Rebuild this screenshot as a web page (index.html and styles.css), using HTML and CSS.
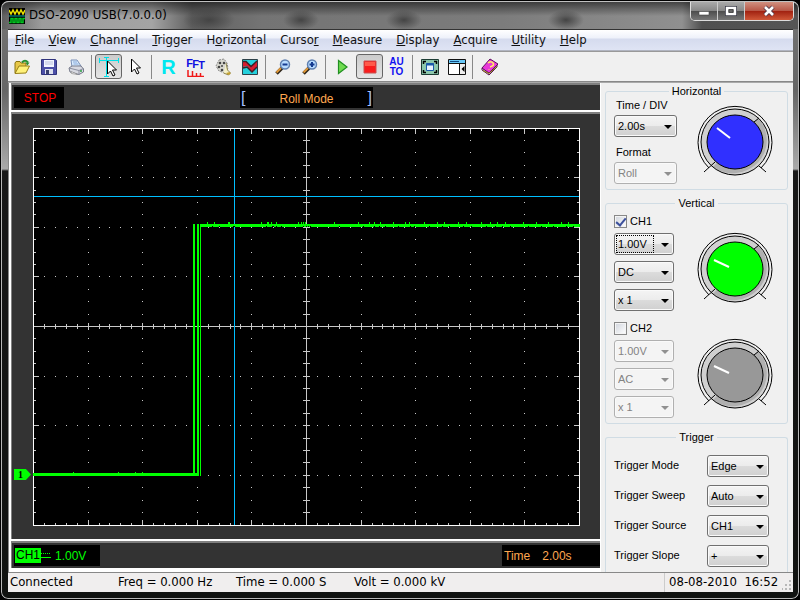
FILE: index.html
```html
<!DOCTYPE html>
<html lang="en">
<head>
<meta charset="utf-8">
<title>DSO-2090 USB(7.0.0.0)</title>
<link rel="stylesheet" href="styles.css">
</head>
<body>
<div class="window">
  <header class="titlebar">
    <svg class="app-icon" width="16" height="16" viewBox="0 0 16 16"><rect width="16" height="16" fill="#000"/><path d="M0 2l2 4 2-4 2 4 2-4 2 4 2-4 2 4 2-4" fill="none" stroke="#e8e000" stroke-width="1.5"/><path d="M0 8h16" stroke="#00a0a0"/><path d="M0 14.500h2v-4h2v4h2v-4h2v4h2v-4h2v4h2v-4h2" fill="none" stroke="#00c820" stroke-width="1.500"/></svg>
    <h1>DSO-2090 USB(7.0.0.0)</h1>
    <div class="controls">
      <button class="ctl min" aria-label="Minimize"><svg width="12" height="12" viewBox="0 0 12 12"><path d="M1 6.500h10v3.500H1z" fill="#fff" stroke="#444" stroke-width=".6"/></svg></button>
      <button class="ctl max" aria-label="Maximize"><svg width="12" height="12" viewBox="0 0 12 12"><path d="M2 3h8v6H2z" fill="none" stroke="#3c3c48" stroke-width="4"/><path d="M2 3h8v6H2z" fill="#777" stroke="#fff" stroke-width="2.400"/><path d="M4 4.500h4v3H4z" fill="#666" stroke="#333" stroke-width=".6"/></svg></button>
      <button class="ctl close" aria-label="Close"><svg width="12" height="12" viewBox="0 0 12 12"><path d="M2 2l8 8M10 2l-8 8" stroke="#50384a" stroke-width="4.500"/><path d="M2 2l8 8M10 2l-8 8" stroke="#fff" stroke-width="2.600"/></svg></button>
    </div>
  </header>

  <div class="client">
    <nav class="menu">
      <a href="#"><u>F</u>ile</a><a href="#"><u>V</u>iew</a><a href="#"><u>C</u>hannel</a><a href="#"><u>T</u>rigger</a><a href="#">H<u>o</u>rizontal</a><a href="#">Curso<u>r</u></a><a href="#"><u>M</u>easure</a><a href="#"><u>D</u>isplay</a><a href="#"><u>A</u>cquire</a><a href="#"><u>U</u>tility</a><a href="#"><u>H</u>elp</a>
    </nav>

    <div class="toolbar">
      <button aria-label="Open"><svg width="16" height="16" viewBox="0 0 16 16"><path d="M1 14V4l1-1.500h4l1 1.500h5v4" fill="#e8c848" stroke="#8a7410"/><path d="M1 14.500L5 7h10.500l-3.500 7z" fill="#fff27a" stroke="#988018"/><path d="M8 3.500q3-3.500 6 0" fill="none" stroke="#289030" stroke-width="2"/><path d="M11.500 3.500h4l-2 3z" fill="#289030"/></svg></button>
      <button aria-label="Save"><svg width="16" height="16" viewBox="0 0 16 16"><path d="M.5.500h14l1 1v14H.500z" fill="#4c50a8" stroke="#30347c"/><path d="M3 1h10v7H3z" fill="#f2f5ff"/><path d="M4 3h8M4 5h8" stroke="#b8bfdc"/><path d="M4 10h8v5H4z" fill="#dde1ef"/><path d="M5 11h3v4H5z" fill="#39406e"/></svg></button>
      <button aria-label="Print"><svg width="16" height="16" viewBox="0 0 16 16"><path d="M4 8l-1-7h6l4 6z" fill="#d8ecff" stroke="#7b91b8"/><path d="M5 3h4M5.500 5h5" stroke="#88a8d8"/><path d="M1 9l3-2h9l2.500 3v3L11 15.500 2 13z" fill="#d8dae2" stroke="#787c8c"/><path d="M1 9l10 2.500 4.500-2M11 11.500v4" fill="none" stroke="#8a8e9e"/><path d="M3 12.500l5 2 1.500 1-6-1z" fill="#fff" stroke="#777" stroke-width=".6"/><circle cx="13" cy="12" r="1" fill="#2ca040"/></svg></button>
      <span class="sep"></span>
      <button class="pressed" aria-label="Measure cursor"><svg width="22" height="22" viewBox="0 0 22 22"><path d="M1 4.500h20M1.500 2v5M20.500 2v5M8.500 1v20M6 20.500h5M6 1.500h5" stroke="#00e0e8" fill="none"/><path d="M9.500 5v13l3-3 2.500 5 2-1-2.500-5h4z" fill="#fff" stroke="#000"/></svg></button>
      <button aria-label="Pointer"><svg width="22" height="22" viewBox="0 0 22 22"><path d="M6.500 3v13l3-3 2.500 5 2-1-2.500-5h4z" fill="#fff" stroke="#000"/></svg></button>
      <span class="sep"></span>
      <button class="t-r">R</button>
      <button class="t-fft" aria-label="FFT"><span>F</span><span>F</span><span>T</span><svg width="18" height="7" viewBox="0 0 18 7"><path d="M1 0v6.500h16M5.500 1v5M9.500 3v3M13.500 3v3" fill="none" stroke="#f01818" stroke-width="1.500"/></svg></button>
      <button aria-label="Record"><svg width="18" height="18" viewBox="0 0 18 18"><path d="M5 2l5-1 3 4 1 5-3 5-6-2-3-5z" fill="#d8d8d0" stroke="#888" stroke-dasharray="2 1"/><g fill="#444"><circle cx="6" cy="5" r="1.300"/><circle cx="10" cy="5" r="1.300"/><circle cx="5" cy="9" r="1.300"/><circle cx="8" cy="12" r="1.300"/><circle cx="8" cy="8" r="1"/></g><path d="M12 5l1.500 7 3 3-2 2-5-2" fill="#f4f0c8" stroke="#8c8450"/><path d="M12 15l4-1 .5 2-2 1z" fill="#c4a030"/></svg></button>
      <button aria-label="Waveform"><svg width="16" height="16" viewBox="0 0 16 16"><path d="M.5.500h15v15H.500z" fill="#24d0dc" stroke="#2c4048"/><path d="M1 2l3 0 5 5 6-5v6l-5 5-5-6-4 1z" fill="#d81c30"/><path d="M1 2.500h3l5 5 6-5.500M1 9l4-1 5 5 5-5" fill="none" stroke="#3a2428" stroke-width="1.500"/></svg></button>
      <span class="sep"></span>
      <button aria-label="Zoom out"><svg width="16" height="16" viewBox="0 0 16 16"><path d="M1.500 14.500L7 9" stroke="#2c2418" stroke-width="3.500"/><path d="M1.500 13.500L6 9" stroke="#e09838" stroke-width="2"/><circle cx="10" cy="5.500" r="4.500" fill="#b8dcff" stroke="#6080b0" stroke-width="1.500"/><path d="M7.500 5.500h5" stroke="#153b90" stroke-width="2"/></svg></button>
      <button aria-label="Zoom in"><svg width="16" height="16" viewBox="0 0 16 16"><path d="M1.500 14.500L7 9" stroke="#2c2418" stroke-width="3.500"/><path d="M1.500 13.500L6 9" stroke="#e09838" stroke-width="2"/><circle cx="10" cy="5.500" r="4.500" fill="#b8dcff" stroke="#6080b0" stroke-width="1.500"/><path d="M7.500 5.500h5M10 3v5" stroke="#153b90" stroke-width="2"/></svg></button>
      <span class="sep"></span>
      <button aria-label="Run"><svg width="16" height="16" viewBox="0 0 16 16"><path d="M3.500 1.500v13L12 8z" fill="#6fdb50" stroke="#219021" stroke-width="1.200"/></svg></button>
      <button class="pressed" aria-label="Stop"><svg width="16" height="16" viewBox="0 0 16 16"><path d="M2 2h12v12H2z" fill="#f81c1c" stroke="#c85050"/><path d="M3 3h10v4H3z" fill="#ff5a4a"/></svg></button>
      <button class="t-auto"><span>AU</span><span>TO</span></button>
      <span class="sep"></span>
      <button aria-label="Full screen"><svg width="18" height="16" viewBox="0 0 18 16"><path d="M.5.500h17v15H.500z" fill="#8cc8ac" stroke="#1c3c34"/><path d="M5.500 4.500h7v7h-7z" fill="#e8f4ff" stroke="#1858a8"/><path d="M5 5.500h8" stroke="#1858a8" stroke-width="2"/><path d="M2.500 5V2.500H5M13 2.500h2.500V5M15.500 11v2.500H13M5 13.500H2.500V11" fill="none" stroke="#000" stroke-width="1.500"/></svg></button>
      <button aria-label="Side panel"><svg width="18" height="16" viewBox="0 0 18 16"><path d="M.5.500h17v15H.500z" fill="#fff" stroke="#111"/><path d="M1 1h16v3H1z" fill="#68c8f8"/><path d="M2 2.500h9" stroke="#104880"/><path d="M0 4.500h18M11.500 4v12" stroke="#111"/><path d="M12 5h5v10h-5z" fill="#eee"/><path d="M16.500 7v6l-3-3z" fill="#000"/></svg></button>
      <span class="sep"></span>
      <button aria-label="Help book"><svg width="18" height="18" viewBox="0 0 18 18"><path d="M1 10l7 5 8-9v3l-8 8-7-5z" fill="#fff" stroke="#551050"/><path d="M1 10L9 1l8 5-9 9z" fill="#e838d8" stroke="#601060"/><path d="M2 12.500l6 3 8-7" fill="none" stroke="#908010"/><path d="M7 5q3-2.500 5 0t-3 4M8 11.500v.5" fill="none" stroke="#fff060" stroke-width="1.600"/></svg></button>
    </div>

    <main class="main">
      <section class="scope">
        <div class="pane strip">
          <output class="badge stop">STOP</output>
          <output class="badge mode"><i>[</i><span>Roll Mode</span><i>]</i></output>
        </div>
        <div class="pane screen">
          <svg class="plot" id="plot" viewBox="0 0 547 398" preserveAspectRatio="none" shape-rendering="crispEdges"></svg>
          <div class="zero">1</div>
        </div>
        <div class="pane strip foot">
          <div class="badge chan"><b>CH1</b><svg width="10" height="6" viewBox="0 0 10 6" shape-rendering="crispEdges"><path d="M0 .5h10" stroke="#0f0" stroke-dasharray="1 1"/><path d="M0 4.500h10" stroke="#0f0"/></svg><span>1.00V</span></div>
          <div class="badge time"><span>Time</span><span>2.00s</span></div>
        </div>
      </section>

      <aside class="side">
        <fieldset class="horizontal">
          <legend>Horizontal</legend>
          <div class="fields">
            <label for="tdiv">Time / DIV</label>
            <span class="combo"><select id="tdiv"><option>2.00s</option></select></span>
            <label for="format">Format</label>
            <span class="combo"><select id="format" disabled><option>Roll</option></select></span>
          </div>
          <div class="dials">
            <svg class="knob blue" width="76" height="74" viewBox="-38 -37 76 74"><use href="#dial"/><path class="hand" d="M-18-14L-5-4"/></svg>
          </div>
        </fieldset>
        <fieldset class="vertical">
          <legend>Vertical</legend>
          <div class="fields">
            <label class="check"><input type="checkbox" checked>CH1</label>
            <span class="combo focus"><select aria-label="CH1 volts"><option>1.00V</option></select></span>
            <span class="combo"><select aria-label="CH1 coupling"><option>DC</option></select></span>
            <span class="combo"><select aria-label="CH1 probe"><option>x 1</option></select></span>
            <label class="check"><input type="checkbox">CH2</label>
            <span class="combo"><select aria-label="CH2 volts" disabled><option>1.00V</option></select></span>
            <span class="combo"><select aria-label="CH2 coupling" disabled><option>AC</option></select></span>
            <span class="combo"><select aria-label="CH2 probe" disabled><option>x 1</option></select></span>
          </div>
          <div class="dials">
            <svg class="knob green" width="76" height="74" viewBox="-38 -37 76 74"><use href="#dial"/><path class="hand" d="M-21-9L-6-2"/></svg>
            <svg class="knob gray" width="76" height="74" viewBox="-38 -37 76 74"><use href="#dial"/><path class="hand" d="M-21-9L-6-2"/></svg>
          </div>
        </fieldset>
        <fieldset class="trigger">
          <legend>Trigger</legend>
          <label for="tm">Trigger Mode</label><span class="combo"><select id="tm"><option>Edge</option></select></span>
          <label for="ts">Trigger Sweep</label><span class="combo"><select id="ts"><option>Auto</option></select></span>
          <label for="tc">Trigger Source</label><span class="combo"><select id="tc"><option>CH1</option></select></span>
          <label for="tl">Trigger Slope</label><span class="combo"><select id="tl"><option>+</option></select></span>
        </fieldset>
      </aside>
    </main>

    <footer class="status">
      <span>Connected</span><span>Freq = 0.000 Hz</span><span>Time = 0.000 S</span><span>Volt = 0.000 kV</span>
      <span class="clock">08-08-2010&nbsp; 16:52</span>
      <svg class="grip" width="10" height="10" viewBox="0 0 10 10"><path d="M7 0h2v2H7zM7 4h2v2H7zM7 8h2v2H7zM3 4h2v2H3zM3 8h2v2H3zM0 8h1v2H0z" fill="#b8b8b8"/></svg>
    </footer>
  </div>
</div>

<svg width="0" height="0" class="defs">
  <defs>
    <g id="dial">
      <path d="M-26 26A37 36 0 1 1 26 26" fill="none" stroke="#000"/>
      <ellipse rx="34" ry="33" fill="#d0d0d0"/>
      <path d="M23-24A34 33 0 0 1-22 25Z" fill="#b0b0b0"/>
      <ellipse rx="34" ry="33" fill="none" stroke="#000"/>
      <path d="M19-20l5-4M-20 20l-11 10M24 24l7 6" stroke="#000" fill="none"/>
      <ellipse class="cap" rx="28" ry="27" stroke="#000"/>
    </g>
  </defs>
</svg>
<script src="plot.js"></script>
</body>
</html>
```
FILE: styles.css
```css
* { box-sizing: border-box; }
body {
  margin: 0;
  background: #000;
  font: 11px/14px "Liberation Sans", Arial, sans-serif;
  color: #000;
}
button, select, input { font: inherit; margin: 0; }
.defs { position: absolute; }

.window {
  display: flex;
  flex-direction: column;
  height: 100vh;
  min-height: 600px;
  padding: 0 6px 7px 7px;
  border: 1px solid #000;
  border-radius: 8px;
  background: linear-gradient(#4a4a4a, #707070 30px, #666 90px, #aaa 168px, #181818 170px, #101210);
  box-shadow: inset 0 0 0 1px #b8b8b8;
}
.titlebar {
  display: flex;
  align-items: flex-start;
  height: 28px;
  margin: 0 -5px 0 -6px;
  padding: 0 4px 0 7px;
  border-top: 1px solid #c0c0c0;
  border-radius: 7px 7px 0 0;
  background:
    linear-gradient(#0008, #0000 14px),
    radial-gradient(ellipse 26px 12px at 207px 18px, #444, transparent),
    radial-gradient(ellipse 18px 10px at 299px 18px, #444, transparent),
    radial-gradient(ellipse 18px 10px at 402px 18px, #444, transparent),
    radial-gradient(ellipse 18px 10px at 564px 18px, #444, transparent),
    linear-gradient(90deg, #606060 0, #9c9c9c 40px, #a4a4a4 150px, #606060 190px, #747474 260px, #7c7c7c 500px, #909090 680px, #505050 700px, #555);
}
.app-icon { margin-top: 6px; }
.titlebar h1 {
  margin: 4px 0 0 4px;
  font: 13px/18px "DejaVu Sans Condensed", "DejaVu Sans", sans-serif;
}
.controls {
  display: flex;
  margin-left: auto;
  border: 1px solid #ddd;
  border-top: 0;
  border-radius: 0 0 5px 5px;
  overflow: hidden;
}
.ctl {
  width: 27px;
  height: 18px;
  padding: 0;
  border: 0;
  border-right: 1px solid #ccc;
  background: linear-gradient(#aaa, #888 48%, #4c4c4c 50%, #777);
  display: grid;
  place-items: center;
}
.close {
  width: 48px;
  border-right: 0;
  background: linear-gradient(#d09080, #b85848 48%, #a02010 50%, #d05838);
}

.client {
  flex: 1;
  display: flex;
  flex-direction: column;
  min-height: 0;
  border-top: 1px solid #333;
  background: #f0f0f0;
}
.menu {
  display: flex;
  gap: 14px;
  height: 21px;
  padding: 0 7px;
  border-bottom: 1px solid #b0b4c0;
  background: linear-gradient(#fff, #eef1fa 40%, #d5dbee 45%, #dfe4f4);
  font: 13px/19px "DejaVu Sans Condensed", "DejaVu Sans", sans-serif;
}
.menu a { color: #111; text-decoration: none; }
.toolbar {
  display: flex;
  align-items: center;
  height: 31px;
  border-top: 1px solid #999;
  border-bottom: 1px solid #888;
}
.toolbar button {
  display: grid;
  place-items: center;
  place-content: center;
  width: 27px;
  height: 25px;
  padding: 0;
  border: 0;
  background: none;
}
.toolbar .pressed {
  border: 1px solid #666;
  border-radius: 3px;
  background: linear-gradient(#ccc, #e4e4e4);
}
.sep { width: 6px; height: 24px; background: linear-gradient(#888, #888) 2px 0 / 1px 100% no-repeat; }
.toolbar .t-r { font: bold 20px/24px "Liberation Sans", sans-serif; color: #00e8f0; }
.toolbar .t-fft {
  grid-template-columns: repeat(3, 6px);
  font: bold 11px/10px "Liberation Sans", sans-serif;
  color: #1010e0;
}
.t-fft span:nth-child(3) { padding-top: 4px; }
.t-fft span:nth-child(2) { padding-top: 2px; }
.t-fft svg { grid-column: 1 / 4; }
.toolbar .t-auto { font: bold 10px/10px "Liberation Sans", sans-serif; color: #1010f0; }
.t-auto span { display: block; height: 10px; }

.main { flex: 1; display: flex; min-height: 0; border-top: 1px solid #aaa; }
.scope {
  flex: 1;
  display: flex;
  flex-direction: column;
  gap: 2px;
  min-width: 0;
  padding: 0 0 4px 2px;
  border-left: 1px solid #888;
  background: #fff;
}
.pane {
  border: solid #808080;
  border-width: 2px 0 0 1px;
  background: #333;
}
.strip {
  display: grid;
  grid-template-columns: 226px 133px 1fr;
  align-items: center;
  height: 27px;
  padding: 0 0 0 2px;
  font-size: 12px;
}
.badge { background: #000; height: 21px; line-height: 22px; }
.stop { width: 50px; color: #f00; text-align: center; padding-left: 2px; }
.mode { display: flex; justify-content: space-between; color: #ffa850; line-height: 24px; padding: 0 1px; }
.mode i { color: #a8c0ff; font-style: normal; font-size: 16px; line-height: 21px; }
.foot { display: flex; justify-content: space-between; }
.chan { display: flex; align-items: center; width: 86px; padding-left: 1px; color: #0f0; }
.chan b { background: #0f0; color: #000; font-weight: normal; line-height: 15px; padding: 0 1px; }
.chan span { padding-left: 4px; }
.time { width: 98px; padding-left: 2px; color: #ffa850; display: flex; gap: 12px; }
.screen { flex: 1; position: relative; padding: 14px 20px 13px 21px; min-height: 0; }
.plot { display: block; width: 100%; height: 100%; background: #000; }
.zero {
  position: absolute;
  left: 2px;
  bottom: 59px;
  width: 17px;
  height: 11px;
  padding-left: 4px;
  background: #0f0;
  clip-path: polygon(0 0, 70% 0, 100% 50%, 70% 100%, 0 100%);
  font: bold 10px/11px "Liberation Serif", serif;
}

.side {
  width: 193px;
  display: flex;
  flex-direction: column;
  gap: 6px;
  padding: 1px 5px 0 4px;
  border-left: 1px solid #fff;
  overflow: hidden;
}
fieldset {
  flex: none;
  min-width: 0;
  margin: 0;
  padding: 0 8px;
  border: 1px solid #d0dce4;
  border-radius: 3px;
  display: grid;
}
legend { margin: 0 auto; padding: 0 3px; }
.horizontal, .vertical { grid-template-columns: 1fr 82px; }
.horizontal { height: 106px; }
.vertical { height: 228px; }
.trigger { height: 180px; border-bottom: 0; }
.fields { display: flex; flex-direction: column; align-items: flex-start; }
.horizontal label { padding-left: 2px; }
.horizontal .combo { width: 63px; margin: 3px 0 8px; }
.vertical .fields { gap: 6px; padding-top: 5px; }
.vertical .combo { width: 60px; }
.check { display: flex; align-items: center; gap: 3px; height: 12px; }
.check:nth-of-type(2) { margin-top: 5px; }
.check input {
  appearance: none;
  width: 13px;
  height: 13px;
  border: 1px solid #888;
  background: linear-gradient(135deg, #d0d4dc, #fff);
  box-shadow: inset 0 0 0 1px #f4f4f4;
  display: grid;
  place-items: center;
}
.check input:checked::after {
  content: "";
  width: 4px;
  height: 8px;
  border: solid #3c509c;
  border-width: 0 2px 2px 0;
  transform: rotate(40deg);
}
.combo { position: relative; display: block; }
.combo select {
  appearance: none;
  display: block;
  width: 100%;
  height: 22px;
  padding: 0 3px;
  border: 1px solid #707070;
  border-radius: 3px;
  background: linear-gradient(#f4f4f4, #ececec 48%, #dcdcdc 50%, #d0d0d0);
  box-shadow: inset 0 0 0 1px #fafafa;
  color: #000;
}
.combo::after {
  content: "";
  position: absolute;
  right: 5px;
  top: 10px;
  border: solid transparent;
  border-width: 4px 4px 0;
  border-top-color: #000;
}
.combo select:disabled { background: #f4f4f4; border-color: #b0b0b0; color: #838383; opacity: 1; }
.combo:has(:disabled)::after { border-top-color: #909090; }
.focus::before { content: ""; position: absolute; inset: 2px 20px 2px 2px; border: 1px dotted #000; }
.dials { display: flex; flex-direction: column; justify-self: end; margin-right: 6px; }
.horizontal .dials { padding-top: 7px; }
.vertical .dials { padding-top: 22px; gap: 32px; }
.knob { display: block; }
.hand { stroke: #fff; stroke-width: 2; }
.blue { fill: #3030ff; }
.green { fill: #00ff00; }
.gray { fill: #989898; }
.trigger { grid-template-columns: 93px 62px; align-content: start; gap: 8px 0; padding-top: 11px; }
.trigger label { line-height: 20px; }

.status {
  display: grid;
  grid-template-columns: 108px 118px 118px 1fr 116px 13px;
  height: 20px;
  padding-left: 2px;
  border-top: 1px solid #888;
  background: #f0eeee;
  font: 13px/18px "DejaVu Sans Condensed", "DejaVu Sans", sans-serif;
  white-space: nowrap;
}
.clock { border-left: 1px solid #ccc; padding-left: 4px; }
.grip { align-self: end; justify-self: end; margin: 0 1px 2px 0; }
```
FILE: plot.js
```js
// Draws the graticule, cursors and channel trace in plot units.
const W = 547, H = 398, COLS = 10, ROWS = 8, SUBX = 5, SUBY = 4;
const out = [];
const rect = (x, y, w, h, fill) =>
  out.push(`<rect x="${x}" y="${y}" width="${w}" height="${h}" fill="${fill}"/>`);
const gx = i => Math.round(i * (W - 1) / (COLS * SUBX));
const gy = j => Math.floor(j * (H - 1) / (ROWS * SUBY));
const GRID = '#c8c8c8';

for (let i = 0; i <= COLS * SUBX; i++) {
  const x = gx(i), major = i % SUBX === 0, len = major ? 5 : 2;
  rect(x, 1, 1, len, GRID);
  rect(x, H - 1 - len, 1, len, GRID);
  rect(x, gy(16) - (major ? 3 : 2), 1, major ? 7 : 5, GRID);
  for (let r = 1; r < ROWS; r++) rect(x, gy(r * SUBY), 1, 1, GRID);
}
for (let j = 0; j <= ROWS * SUBY; j++) {
  const y = gy(j), major = j % SUBY === 0, len = major ? 5 : 2;
  rect(1, y, len, 1, GRID);
  rect(W - 1 - len, y, len, 1, GRID);
  rect(gx(25) - 3, y, 7, 1, GRID);
  for (let c = 1; c < COLS; c++) rect(gx(c * SUBX), y, 1, 1, GRID);
}
rect(gx(25), 0, 1, H, GRID);
rect(0, gy(16), W, 1, GRID);

rect(0, 0, W, 1, '#fff');
rect(0, H - 1, W, 1, '#fff');
rect(0, 0, 1, H, '#fff');
rect(W - 1, 0, 1, H, '#fff');

rect(201, 1, 1, H - 2, '#00bfff');
rect(1, 68, W - 2, 1, '#00bfff');

const TRACE = '#00ff00';
rect(0, 345, 165, 3, TRACE);
rect(160, 96, 2, 252, TRACE);
rect(164, 96, 2, 252, TRACE);
rect(167, 96, 1, 252, TRACE);
rect(167, 96, W - 167, 3, TRACE);
[40, 85, 102, 109].forEach(x => rect(x, 344, 1, 1, TRACE));
[174, 181, 195, 196, 228, 234, 235, 238, 243, 265, 268, 270, 272, 301, 325, 336, 341,
 347, 360, 372, 376, 391, 404, 411, 425, 433, 448, 457, 464, 472, 490, 503, 515, 528, 535]
  .forEach(x => { rect(x, 94, 1, 2, TRACE); rect(x + 5, 98, 1, 1, '#000'); });

document.getElementById('plot').innerHTML = out.join('');
```
